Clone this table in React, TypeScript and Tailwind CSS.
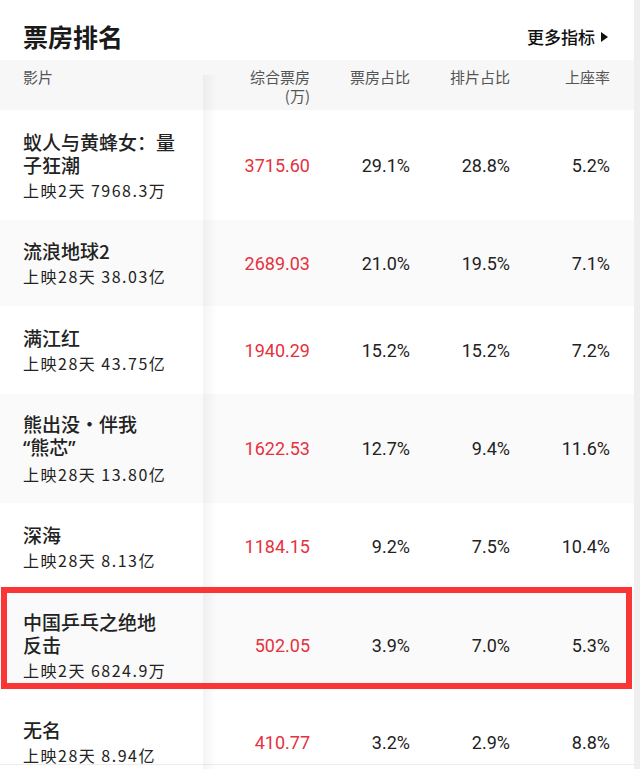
import React from "react";

type Movie = {
  title: React.ReactNode;
  sub: string;
  box: string;
  share: string;
  sched: string;
  seat: string;
  rowClass: string;
};

const MOVIES: Movie[] = [
  {
    title: (
      <>
        蚁人与黄蜂女：量
        <br />
        子狂潮
      </>
    ),
    sub: "上映2天 7968.3万",
    box: "3715.60",
    share: "29.1%",
    sched: "28.8%",
    seat: "5.2%",
    rowClass: "h-[110px] bg-white",
  },
  {
    title: "流浪地球2",
    sub: "上映28天 38.03亿",
    box: "2689.03",
    share: "21.0%",
    sched: "19.5%",
    seat: "7.1%",
    rowClass: "h-[86px] bg-[#fafafa]",
  },
  {
    title: "满江红",
    sub: "上映28天 43.75亿",
    box: "1940.29",
    share: "15.2%",
    sched: "15.2%",
    seat: "7.2%",
    rowClass: "h-[88px] bg-white",
  },
  {
    title: (
      <>
        熊出没·伴我
        <br />
        <span className="font-['Noto_Sans',sans-serif]">“</span>熊芯
        <span className="font-['Noto_Sans',sans-serif]">”</span>
      </>
    ),
    sub: "上映28天 13.80亿",
    box: "1622.53",
    share: "12.7%",
    sched: "9.4%",
    seat: "11.6%",
    rowClass: "h-[109px] bg-[#fafafa]",
  },
  {
    title: "深海",
    sub: "上映28天 8.13亿",
    box: "1184.15",
    share: "9.2%",
    sched: "7.5%",
    seat: "10.4%",
    rowClass: "h-[87px] bg-white",
  },
  {
    title: (
      <>
        中国乒乓之绝地
        <br />
        反击
      </>
    ),
    sub: "上映2天 6824.9万",
    box: "502.05",
    share: "3.9%",
    sched: "7.0%",
    seat: "5.3%",
    rowClass: "h-[98px] pt-[12px] bg-[#fafafa]",
  },
  {
    title: "无名",
    sub: "上映28天 8.94亿",
    box: "410.77",
    share: "3.2%",
    sched: "2.9%",
    seat: "8.8%",
    rowClass: "h-[77px] pt-[32px] bg-white border-b border-[#ececec]",
  },
];

function MovieRow({ m }: { m: Movie }) {
  return (
    <div className={`flex items-center ${m.rowClass}`}>
      <div className="w-[203px] shrink-0 pl-[23px] pr-[12px] font-['Noto_Sans_CJK_SC',sans-serif] text-[#222]">
        <div className="text-[19px] leading-[23px] font-medium">{m.title}</div>
        <div className="mt-[3px] text-[16px] leading-[22px] tracking-[1.5px] text-[#222]">{m.sub}</div>
      </div>
      <div className="flex font-['Roboto','Noto_Sans_CJK_SC',sans-serif] text-[18px] text-[#222]">
        <div className="w-[107px] text-right text-[#e5323e]">{m.box}</div>
        <div className="w-[100px] text-right">{m.share}</div>
        <div className="w-[100px] text-right">{m.sched}</div>
        <div className="w-[100px] text-right">{m.seat}</div>
      </div>
    </div>
  );
}

export default function App() {
  return (
    <div className="flex w-[640px] h-[769px] overflow-hidden bg-white">
      <div className="relative w-[634px] shrink-0">
        {/* title bar */}
        <div className="flex h-[60px] items-center justify-between pl-[23px] pr-[26px] pt-[14px] font-['Noto_Sans_CJK_SC',sans-serif]">
          <h1 className="text-[25px] font-bold text-[#1a1a1a]">票房排名</h1>
          <div className="flex items-center gap-[6px] text-[17px] font-medium text-[#111]">
            更多指标
            <svg width="7" height="10" viewBox="0 0 7 10">
              <path d="M0 0 L7 5 L0 10 Z" fill="#111" />
            </svg>
          </div>
        </div>

        {/* header */}
        <div className="flex h-[50px] bg-[#f7f7f7] pt-[7px] font-['Noto_Sans_CJK_SC',sans-serif] text-[15px] leading-[19px] text-[#555]">
          <div className="w-[203px] shrink-0 pl-[23px]">影片</div>
          <div className="w-[107px] text-right">
            综合票房
            <br />
            (万)
          </div>
          <div className="w-[100px] text-right">票房占比</div>
          <div className="w-[100px] text-right">排片占比</div>
          <div className="w-[100px] text-right">上座率</div>
        </div>

        {MOVIES.map((m) => (
          <MovieRow key={m.box} m={m} />
        ))}

        {/* sticky column shadow */}
        <div className="pointer-events-none absolute left-[203px] top-[75px] bottom-0 w-[14px] bg-gradient-to-r from-black/[0.045] to-transparent" />

        {/* highlight box */}
        <div className="pointer-events-none absolute left-[1px] top-[587px] h-[102px] w-[631px] border-[6px] border-[#fa3535]" />
      </div>
      <div className="w-[6px] shrink-0 bg-[#efefef]" />
    </div>
  );
}
